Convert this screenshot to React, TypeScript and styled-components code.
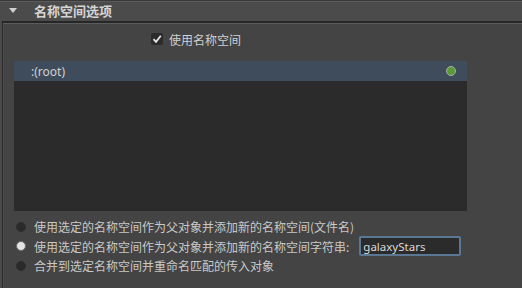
import React from "react";
import styled, { createGlobalStyle } from "styled-components";

const Global = createGlobalStyle`
  html, body { margin: 0; padding: 0; }
  body {
    background: #4a4a4a;
    width: 522px;
    height: 288px;
    overflow: hidden;
    font-family: "Noto Sans CJK SC", "Noto Sans", sans-serif;
    color: #c8c8c8;
  }
`;

const Page = styled.div`
  width: 522px;
  height: 288px;
  display: flex;
  flex-direction: column;
`;

const Header = styled.div`
  height: 20px;
  flex: none;
  display: flex;
  align-items: center;
  background: #4b4b4b;
  border-top: 1px solid #393939;
  box-shadow: inset 0 1px 0 #5a5a5a;
  padding-left: 9px;
`;

const Triangle = styled.svg`
  width: 8px;
  height: 5px;
  flex: none;
  margin-top: -1px;
`;

const HeaderTitle = styled.span`
  margin-left: 17px;
  font-size: 13px;
  font-weight: bold;
  color: #d4d4d4;
  line-height: 20px;
`;

const Frame = styled.div`
  flex: 1;
  margin-left: 2px;
  border-top: 2px solid #262626;
  border-left: 1px solid #2a2a2a;
  display: flex;
`;

const Inner = styled.div`
  flex: 1;
  background: #444444;
  border-top: 1px solid #5c5c5c;
  border-left: 1px solid #4c4c4c;
  display: flex;
  flex-direction: column;
`;

const CheckRow = styled.label`
  margin-top: 7px;
  height: 16px;
  padding-left: 147px;
  display: flex;
  align-items: center;
  gap: 6px;
  font-size: 12px;
  color: #cfcfcf;
`;

const CheckBox = styled.span`
  width: 12px;
  height: 12px;
  border-radius: 2px;
  background: #2b2b2b;
  display: flex;
  align-items: center;
  justify-content: center;
`;

const List = styled.div`
  margin-top: 14px;
  margin-left: 10px;
  width: 453px;
  height: 150px;
  background: #2b2b2b;
  display: flex;
  flex-direction: column;
`;

const ListRow = styled.div<{ $selected?: boolean }>`
  height: 20px;
  display: flex;
  align-items: center;
  padding-left: 17px;
  padding-right: 11px;
  background: ${(p) => (p.$selected ? "#3f4c5b" : "transparent")};
  font-family: "Noto Sans", sans-serif;
  font-size: 12px;
  color: #d0d0d0;
`;

const RowName = styled.span`
  flex: 1;
`;

const Dot = styled.span`
  width: 8px;
  height: 8px;
  border-radius: 50%;
  background: #5a9a38;
  border: 1px solid #a9b2a4;
`;

const Options = styled.div`
  margin-top: 6px;
  margin-left: 12px;
  display: flex;
  flex-direction: column;
`;

const RadioRow = styled.label`
  height: 19.5px;
  display: flex;
  align-items: center;
  font-size: 12px;
  color: #c8c8c8;
  white-space: nowrap;
`;

const Radio = styled.span<{ $checked?: boolean }>`
  width: 10px;
  height: 10px;
  border-radius: 50%;
  flex: none;
  box-sizing: border-box;
  background: ${(p) => (p.$checked ? "#e4e4e4" : "#2a2a2a")};
  border: 1px solid ${(p) => (p.$checked ? "#6a6a6a" : "#2e2e2e")};
  margin-right: 8px;
`;

const Field = styled.div`
  margin-left: 10px;
  width: 96px;
  height: 16px;
  border: 2px solid #5a7794;
  border-radius: 2px;
  background: #2b2b2b;
  display: flex;
  align-items: center;
  padding-left: 2px;
  font-family: "Noto Sans", sans-serif;
  font-size: 11.5px;
  color: #d8d8d8;
`;

export default function App() {
  return (
    <Page>
      <Global />
      <Header>
        <Triangle viewBox="0 0 8 5">
          <polygon points="0,0 8,0 4,5" fill="#d0d0d0" />
        </Triangle>
        <HeaderTitle>名称空间选项</HeaderTitle>
      </Header>
      <Frame>
        <Inner>
          <CheckRow>
            <CheckBox>
              <svg width="10" height="10" viewBox="0 0 10 10">
                <path d="M1.5 5.2 L4 7.8 L8.8 1.8" stroke="#e8e8e8" strokeWidth="1.8" fill="none" />
              </svg>
            </CheckBox>
            使用名称空间
          </CheckRow>
          <List>
            <ListRow $selected>
              <RowName>:(root)</RowName>
              <Dot />
            </ListRow>
          </List>
          <Options>
            <RadioRow>
              <Radio />
              使用选定的名称空间作为父对象并添加新的名称空间(文件名)
            </RadioRow>
            <RadioRow>
              <Radio $checked />
              使用选定的名称空间作为父对象并添加新的名称空间字符串:
              <Field>galaxyStars</Field>
            </RadioRow>
            <RadioRow>
              <Radio />
              合并到选定名称空间并重命名匹配的传入对象
            </RadioRow>
          </Options>
        </Inner>
      </Frame>
    </Page>
  );
}
